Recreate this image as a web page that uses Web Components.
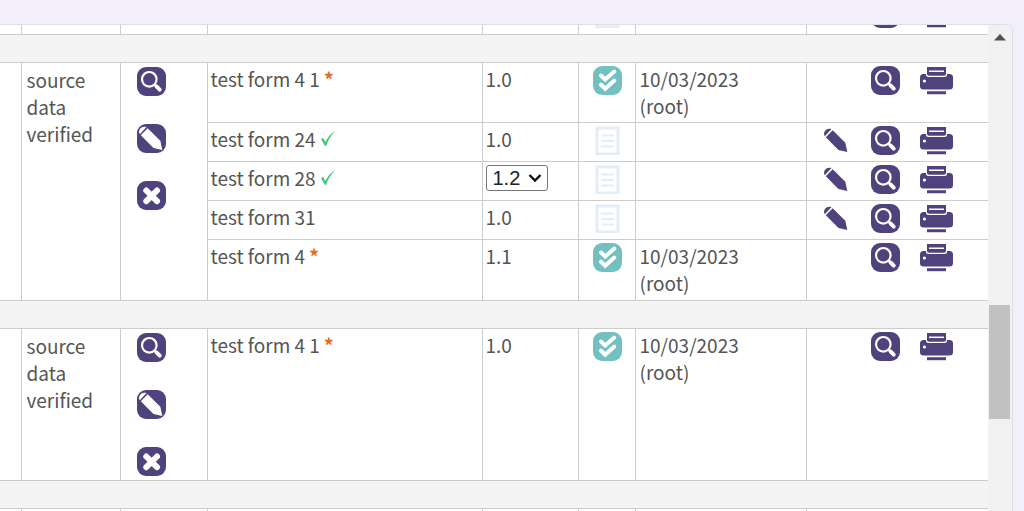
<!DOCTYPE html>
<html lang="en">
<head>
<meta charset="utf-8">
<meta name="viewport" content="width=device-width, initial-scale=1">
<title>Forms</title>
<style>
  body {
    margin: 0;
    height: 100vh;
    overflow: hidden;
    background-color: #f2effa;
    color: #555;
    font: 19px/27px "Noto Sans CJK SC", "Noto Sans", sans-serif;
  }
</style>
</head>
<body>
<scroll-panel>
  <forms-table></forms-table>
</scroll-panel>

<script>
const PENCIL = `
  <path d="M2.300 9.500C1 5 5 1.500 9.500 3L3 10Z"/>
  <path d="M10.700 4.200L23.300 16.800L25.300 26L16.500 24L3.800 11.300Z"/>`;

const ICONS = {
  view: `
    <rect width="29" height="29" rx="9" fill="#4f427d"/>
    <circle cx="12.300" cy="12.300" r="7.300" fill="none" stroke="#fff" stroke-width="2.200"/>
    <path d="M17.500 17.500L19.500 19.500" stroke="#fff" stroke-width="2.500"/>
    <path d="M19.700 19.700L22.700 22.700" stroke="#fff" stroke-width="4" stroke-linecap="round"/>`,
  edit: `<rect width="29" height="29" rx="9" fill="#4f427d"/><g fill="#fff">${PENCIL}</g>`,
  remove: `
    <rect width="29" height="29" rx="9" fill="#4f427d"/>
    <path d="M9.300 9.500L20 20.200M20 9.500L9.300 20.200" stroke="#fff" stroke-width="6" stroke-linecap="round"/>`,
  pencil: `<g fill="#4f427d">${PENCIL}</g>`,
  verified: `
    <rect width="29" height="29" rx="9" fill="#73c0c0"/>
    <path d="M8 9.500L12.200 13.500L21.300 5.500M8 18.700L12.200 22.800L21.300 14.500" fill="none" stroke="#fff" stroke-width="4" stroke-linecap="round"/>`,
  empty: `
    <path d="M4 2H25V28H4Z" fill="none" stroke="#e4edf5" stroke-width="3"/>
    <path d="M8 9.500H21M8 15H21M8 20.500H21" stroke="#e4edf5" stroke-width="2"/>`,
  print: `
    <rect y="8" width="33" height="15.500" rx="3.500" fill="#4f427d"/>
    <path d="M6 2H27V8.500Q27 11 24.500 11H8.500Q6 11 6 8.500Z" fill="#fff"/>
    <path d="M7 1H26V8Q26 9.800 24 9.800H9Q7 9.800 7 8Z" fill="#4f427d"/>
    <path d="M9 5.300H24" stroke="#fff" stroke-width="1.500"/>
    <circle cx="4.400" cy="15" r="1.600" fill="#fff"/>
    <path d="M7 26.700H26" stroke="#4f427d" stroke-width="3"/>`,
  tick: `<path d="M1 9L3 8L5.500 12Q9 4.500 15.500 1Q9 7 6 16H5Z" fill="#3fc872"/>`,
};

const ICON_WIDTHS = { print: 33, tick: 17 };

class FormIcon extends HTMLElement {
  constructor() {
    super();
    this.attachShadow({ mode: "open" });
  }

  connectedCallback() {
    const name = this.getAttribute("name");
    const width = ICON_WIDTHS[name] || 29;
    const height = name === "tick" ? 17 : 29;
    this.shadowRoot.innerHTML = `
      <style>
        :host { display: inline-block; }
        svg { display: block; }
      </style>
      <svg width="${width}" height="${height}" viewBox="0 0 ${width} ${height}" aria-hidden="true">${ICONS[name]}</svg>
    `;
  }
}

customElements.define("form-icon", FormIcon);

class IconButton extends HTMLElement {
  constructor() {
    super();
    this.attachShadow({ mode: "open" });
  }

  connectedCallback() {
    this.shadowRoot.innerHTML = `
      <style>
        :host { display: block; }
        button {
          display: block;
          padding: 0;
          border: 0;
          background: none;
          cursor: pointer;
        }
        form-icon { display: block; }
      </style>
      <button type="button" aria-label="${this.getAttribute("label")}">
        <form-icon name="${this.getAttribute("icon")}"></form-icon>
      </button>
    `;
  }
}

customElements.define("icon-button", IconButton);

class VersionSelect extends HTMLElement {
  constructor() {
    super();
    this.attachShadow({ mode: "open" });
  }

  connectedCallback() {
    this.shadowRoot.innerHTML = `
      <style>
        :host {
          display: inline-grid;
          align-items: center;
          vertical-align: top;
        }
        select, svg { grid-area: 1 / 1; }
        select {
          appearance: none;
          height: 26px;
          padding: 0 26px 0 6px;
          border: 1px solid #767676;
          border-radius: 3px;
          background-color: #fff;
          color: #222;
          font: 20px/24px "Liberation Sans", Arial, sans-serif;
        }
        svg {
          justify-self: end;
          margin-right: 6px;
          pointer-events: none;
        }
      </style>
      <select aria-label="Version">
        <option>${this.getAttribute("value")}</option>
      </select>
      <svg width="14" height="10" viewBox="0 0 14 10" aria-hidden="true">
        <path d="M1.500 2L7 7.500L12.500 2" fill="none" stroke="#111" stroke-width="2.400"/>
      </svg>
    `;
  }
}

customElements.define("version-select", VersionSelect);

class ScrollPanel extends HTMLElement {
  constructor() {
    super();
    this.attachShadow({ mode: "open" });
    this.shadowRoot.innerHTML = `
      <style>
        :host {
          display: flex;
          box-sizing: border-box;
          height: 100vh;
          padding: 24px 11px 0 0;
        }
        .panel {
          display: flex;
          flex: 1;
          min-width: 0;
          overflow: hidden;
          border: 1px solid #dfdde6;
          border-width: 1px 1px 0 0;
          border-top-right-radius: 6px;
          background-color: #fff;
        }
        .content {
          flex: 1;
          min-width: 0;
          overflow: hidden;
        }
        .rail {
          display: flex;
          flex-direction: column;
          width: 24px;
          background-color: #f1f1f1;
        }
        .rail button {
          height: 24px;
          padding: 0;
          border: 0;
          background: none;
        }
        .rail svg { display: block; margin: 0 auto; }
        .track {
          display: flex;
          flex: 1;
          flex-direction: column;
          padding: 0 2px 0 1px;
        }
        .before { flex: 256; }
        .thumb { flex: 114; background-color: #c1c1c1; }
        .after { flex: 92; }
      </style>
      <div class="panel">
        <div class="content"><slot></slot></div>
        <div class="rail">
          <button type="button" aria-label="Scroll up">
            <svg width="12" height="7" viewBox="0 0 12 7"><path d="M0 6.500L6 0L12 6.500Z" fill="#505050"/></svg>
          </button>
          <div class="track">
            <div class="before"></div>
            <div class="thumb"></div>
            <div class="after"></div>
          </div>
        </div>
      </div>
    `;
  }
}

customElements.define("scroll-panel", ScrollPanel);

const SIGNED = "10/03/2023<br>(root)";

const GROUPS = [
  { forms: [{ size: "short", icon: "empty" }] },
  {
    status: "source data verified",
    forms: [
      { size: "tall", name: "test form 4 1", mark: "required", version: "1.0", icon: "verified", signed: SIGNED },
      { size: "short", name: "test form 24", mark: "done", version: "1.0", icon: "empty", editable: true },
      { size: "short", name: "test form 28", mark: "done", versions: "1.2", icon: "empty", editable: true },
      { size: "short", name: "test form 31", version: "1.0", icon: "empty", editable: true },
      { size: "last", name: "test form 4", mark: "required", version: "1.1", icon: "verified", signed: SIGNED },
    ],
  },
  {
    status: "source data verified",
    forms: [
      { size: "full", name: "test form 4 1", mark: "required", version: "1.0", icon: "verified", signed: SIGNED },
    ],
  },
  { forms: [{ size: "short", icon: "empty" }] },
];

class FormsTable extends HTMLElement {
  constructor() {
    super();
    this.attachShadow({ mode: "open" });
  }

  templateCss() {
    return `
      <style>
        :host {
          display: block;
          /* the list is scrolled part of the way through its first row */
          margin-top: -30px;
        }
        table {
          width: 100%;
          table-layout: fixed;
          border-collapse: collapse;
        }
        td {
          padding: 2px 3px;
          border: 1px solid #ccc;
          vertical-align: top;
        }
        .gap td { border-left: 0; }
        td:last-child { border-right: 0; }
        col.lead { width: 21px; }
        col.status { width: 99px; }
        col.tools { width: 87px; }
        col.version { width: 96px; }
        col.state { width: 57px; }
        col.signed { width: 171px; }
        col.actions { width: 182px; }
        tr.short { height: 39px; }
        tr.tall { height: 60px; }
        tr.last { height: 61px; }
        tr.full { height: 152px; }
        tr.gap { height: 28px; }
        .lead-cell { border-left: 0; }
        .gap td { padding: 0; background-color: #f4f4f4; }
        .status-cell { padding: 3px 5px; }
        .tools-cell > div {
          display: flex;
          flex-direction: column;
          gap: 28px;
          padding: 2px 0 0 13px;
        }
        .state-cell { padding: 3px 0 0 2px; text-align: center; }
        .state-cell form-icon { vertical-align: top; }
        .signed-cell { padding-left: 4px; }
        .actions-cell { padding: 3px 35px 0 0; }
        .actions-cell > div {
          display: flex;
          justify-content: flex-end;
          gap: 20px;
        }
        .required { color: #e8671b; font-weight: bold; }
        version-select { margin-top: 1px; }
      </style>
    `;
  }

  mark(form) {
    if (form.mark === "required") return ` <span class="required">*</span>`;
    if (form.mark === "done") return ` <form-icon name="tick"></form-icon>`;
    return "";
  }

  formCells(form) {
    return `
      <td>${form.name || ""}${this.mark(form)}</td>
      <td>${form.versions ? `<version-select value="${form.versions}"></version-select>` : form.version || ""}</td>
      <td class="state-cell"><form-icon name="${form.icon}"></form-icon></td>
      <td class="signed-cell">${form.signed || ""}</td>
      <td class="actions-cell">
        <div>
          ${form.editable ? `<icon-button icon="pencil" label="Edit form"></icon-button>` : ""}
          <icon-button icon="view" label="View form"></icon-button>
          <icon-button icon="print" label="Print form"></icon-button>
        </div>
      </td>
    `;
  }

  group(group) {
    const span = group.forms.length;
    const tools = group.status ? `
      <div>
        <icon-button icon="view" label="View"></icon-button>
        <icon-button icon="edit" label="Edit"></icon-button>
        <icon-button icon="remove" label="Remove"></icon-button>
      </div>` : "";
    return group.forms.map((form, i) => `
      <tr class="${form.size}">
        ${i === 0 ? `
          <td rowspan="${span}" class="lead-cell"></td>
          <td rowspan="${span}" class="status-cell">${group.status || ""}</td>
          <td rowspan="${span}" class="tools-cell">${tools}</td>` : ""}
        ${this.formCells(form)}
      </tr>`).join("");
  }

  template() {
    const gap = `<tr class="gap"><td colspan="8"></td></tr>`;
    return `
      <table>
        <colgroup>
          <col class="lead"><col class="status"><col class="tools"><col>
          <col class="version"><col class="state"><col class="signed"><col class="actions">
        </colgroup>
        <tbody>${GROUPS.map((group) => this.group(group)).join(gap)}</tbody>
      </table>
    `;
  }

  connectedCallback() {
    this.shadowRoot.innerHTML = `
      ${this.templateCss()}
      ${this.template()}
    `;
  }
}

customElements.define("forms-table", FormsTable);
</script>
</body>
</html>
